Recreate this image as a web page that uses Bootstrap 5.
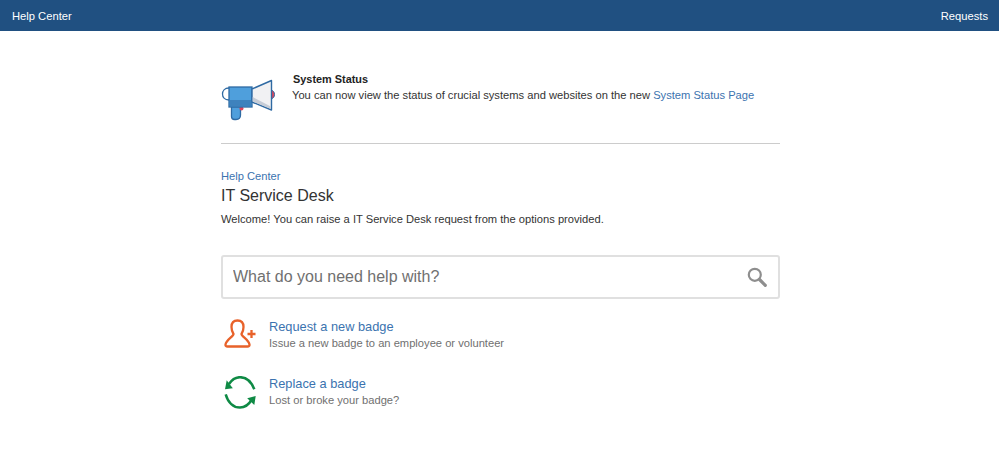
<!DOCTYPE html>
<html lang="en">
<head>
<meta charset="utf-8">
<title>Help Center</title>
<link rel="stylesheet" href="https://cdn.jsdelivr.net/npm/bootstrap@5.3.0/dist/css/bootstrap.min.css">
<style>
body { font-family: "Liberation Sans", Arial, sans-serif; font-size: 11.17px; line-height: 16px; color: #333; background: #fff; }
a { color: #3b73af; text-decoration: none; }
.topbar { height: 31px; background: #205081; padding: 0 11px 0 12px; }
.topbar a { color: #fff; font-size: 11.2px; }
.mainwrap { width: 559px; margin-left: 221px; }
.notice { height: 113px; padding-top: 40px; border-bottom: 1px solid #ccc; }
.notice-icon { width: 54px; flex: none; margin-top: 7px; }
.notice-body { margin-left: 17px; flex: none; white-space: nowrap; }
.notice-title { font-weight: 700; color: #222; font-size: 10.9px; margin-left: 1px; }
.crumb { margin-top: 24px; }
.desk-title { font-size: 16px; line-height: 20px; font-weight: 400; color: #333; margin: 2px 0 0; }
.welcome { margin: 5px 0 0; color: #333; }
.searchbox { height: 44px; margin-top: 28px; border: 2px solid #e0e0e0; border-radius: 3px; padding: 0 11px 0 10px; }
.searchbox input { border: 0; outline: 0; font-size: 16px; color: #707070; flex: 1; padding: 0; font-family: inherit; }
.searchbox input::placeholder { color: #707070; opacity: 1; }
.rtlist { margin-top: 19px; }
.rtitem { height: 57px; }
.rticon { width: 48px; flex: none; padding: 1px 0 0 3px; }
.rtname { font-size: 12.8px; line-height: 17px; display: block; }
.rtdesc { color: #707070; line-height: 16px; display: block; }
</style>
</head>
<body>
<nav class="topbar d-flex justify-content-between align-items-center">
  <a href="#">Help Center</a>
  <a href="#">Requests</a>
</nav>
<main class="mainwrap">
  <section class="notice d-flex">
    <div class="notice-icon">
      <svg width="54" height="44" viewBox="0 0 54 44" fill="none">
        <path d="M50 12 C52.500 12.500 53.500 14.500 53.500 16.500 C53.500 18.500 52.500 20.500 50 21 Z" fill="#e0455a" stroke="#2f6aa3" stroke-width="1"/>
        <path d="M8 10 C3.500 10 1.500 13 1.500 16 C1.500 19 3.500 22 8 22" stroke="#2f6aa3" stroke-width="1.300"/>
        <path d="M10.500 28.500 H19.500 V37 Q19.500 41.500 15 41.500 H13.500 Q10.500 41.500 10.500 38.500 Z" fill="#4f9fdc" stroke="#2f6aa3" stroke-width="1.300"/>
        <circle cx="20.500" cy="30.500" r="2" fill="#e0455a"/>
        <rect x="8" y="9" width="23" height="20" fill="#4f9fdc" stroke="#2f6aa3" stroke-width="1.300"/>
        <rect x="8.700" y="22" width="21.600" height="6.300" fill="#3e82bd"/>
        <path d="M31 11 L50.500 2.500 V32 L31 24 Z" fill="#f1f1f3" stroke="#2f6aa3" stroke-width="1.400" stroke-linejoin="round"/>
        <path d="M31.700 19 L49.800 28.500 V31 L31.700 23.500 Z" fill="#c6ccd6"/>
      </svg>
    </div>
    <div class="notice-body">
      <div class="notice-title">System Status</div>
      <div>You can now view the status of crucial systems and websites on the new <a href="#">System Status Page</a></div>
    </div>
  </section>
  <div class="crumb"><a href="#">Help Center</a></div>
  <h1 class="desk-title">IT Service Desk</h1>
  <p class="welcome">Welcome! You can raise a IT Service Desk request from the options provided.</p>
  <form class="searchbox d-flex align-items-center">
    <input type="text" placeholder="What do you need help with?" aria-label="Search">
    <svg width="20" height="20" viewBox="0 0 20 20" fill="none">
      <circle cx="7.800" cy="7.800" r="6" stroke="#8e8e8e" stroke-width="2.200"/>
      <path d="M12.500 12.500 L18.300 18.300" stroke="#8e8e8e" stroke-width="3.200" stroke-linecap="round"/>
    </svg>
  </form>
  <div class="rtlist">
    <div class="rtitem d-flex">
      <div class="rticon">
        <svg width="33" height="30" viewBox="0 0 33 30" fill="none">
          <path d="M13.500 1.500 C9 1.500 7.500 4.500 7.500 8 C7.500 11 8.500 13.500 9.500 15 C9.500 17.500 2.500 20.500 1.500 25.500 Q1.300 27.500 3.500 27.500 H23.500 Q25.700 27.500 25.500 25.500 C24.500 20.500 17.500 17.500 17.500 15 C18.500 13.500 19.500 11 19.500 8 C19.500 4.500 18 1.500 13.500 1.500 Z" stroke="#e8622a" stroke-width="2.300" stroke-linejoin="round"/>
          <path d="M23.500 15 H31.500 M27.500 11 V19" stroke="#e8622a" stroke-width="2.300"/>
        </svg>
      </div>
      <div>
        <a class="rtname" href="#">Request a new badge</a>
        <span class="rtdesc">Issue a new badge to an employee or volunteer</span>
      </div>
    </div>
    <div class="rtitem d-flex">
      <div class="rticon">
        <svg width="33" height="33" viewBox="0 0 33 33" fill="none">
          <path d="M5 8 C8 3.500 12 1.200 16 1.200 C22.500 1.200 27.500 6 30.300 13.300" stroke="#0f8a45" stroke-width="2.500"/>
          <path d="M1.700 18.300 C4 26.500 9.500 31.500 16 31.500 C20.500 31.500 24.500 29 27.500 24" stroke="#0f8a45" stroke-width="2.500"/>
          <path d="M1 13.300 L2.700 4.300 L8.800 12.300 Z" fill="#0f8a45"/>
          <path d="M31.700 20 L30.300 29 L23.200 22.300 Z" fill="#0f8a45"/>
        </svg>
      </div>
      <div>
        <a class="rtname" href="#">Replace a badge</a>
        <span class="rtdesc">Lost or broke your badge?</span>
      </div>
    </div>
  </div>
</main>
<script src="https://cdn.jsdelivr.net/npm/bootstrap@5.3.0/dist/js/bootstrap.bundle.min.js"></script>
</body>
</html>
